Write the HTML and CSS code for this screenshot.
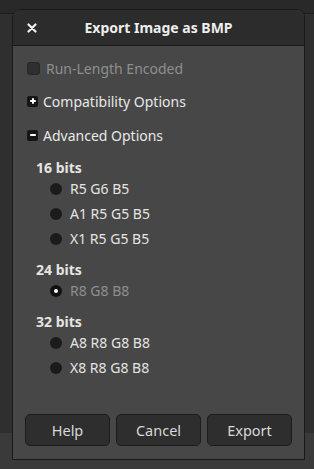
FILE: index.html
```html
<!DOCTYPE html>
<html lang="en">
<head>
<meta charset="utf-8">
<title>Export Image as BMP</title>
<link rel="stylesheet" href="styles.css">
</head>
<body>
<div class="dialog">
  <div class="header">
    <div class="close">
      <svg width="10" height="10" viewBox="0 0 10 10"><path d="M1.5 1.5 L8.5 8.5 M8.5 1.5 L1.5 8.5" stroke="#f0f0f0" stroke-width="2.2" stroke-linecap="round" fill="none"/></svg>
    </div>
    <div class="title">Export Image as BMP</div>
    <div class="spacer"></div>
  </div>
  <div class="content">
    <div class="row check-row disabled">
      <span class="checkbox"></span>
      <span>Run-Length Encoded</span>
    </div>
    <div class="row expander first">
      <span class="exp-icon">
        <svg width="10" height="10" viewBox="0 0 10 10"><path d="M5 2.2 V7.8 M2.2 5 H7.8" stroke="#fff" stroke-width="2" fill="none"/></svg>
      </span>
      <span>Compatibility Options</span>
    </div>
    <div class="row expander">
      <span class="exp-icon">
        <svg width="10" height="10" viewBox="0 0 10 10"><path d="M2.2 5 H7.8" stroke="#fff" stroke-width="2" fill="none"/></svg>
      </span>
      <span>Advanced Options</span>
    </div>
    <div class="group g16">
      <div class="group-label">16 bits</div>
      <div class="radio-row"><span class="radio"></span><span>R5 G6 B5</span></div>
      <div class="radio-row"><span class="radio"></span><span>A1 R5 G5 B5</span></div>
      <div class="radio-row"><span class="radio"></span><span>X1 R5 G5 B5</span></div>
    </div>
    <div class="group">
      <div class="group-label">24 bits</div>
      <div class="radio-row disabled"><span class="radio checked"></span><span>R8 G8 B8</span></div>
    </div>
    <div class="group">
      <div class="group-label">32 bits</div>
      <div class="radio-row"><span class="radio"></span><span>A8 R8 G8 B8</span></div>
      <div class="radio-row"><span class="radio"></span><span>X8 R8 G8 B8</span></div>
    </div>
  </div>
  <div class="actions">
    <button class="btn">Help</button>
    <button class="btn">Cancel</button>
    <button class="btn">Export</button>
  </div>
</div>
</body>
</html>
```
FILE: styles.css
```css
* { box-sizing: border-box; }
html, body { margin: 0; padding: 0; }
body {
  width: 314px;
  height: 469px;
  overflow: hidden;
  font-family: "Noto Sans", "Open Sans", sans-serif;
  font-size: 14px;
  color: #e4e4e2;
  background: linear-gradient(to bottom, #292929 0 13px, #1c1c1c 13px 14px, #2f2f2f 14px 433px, #3a3a3a 433px);
  padding-top: 9px;
  padding-left: 12px;
}
.dialog {
  width: 293px;
  height: 451px;
  border: 1px solid #1a1a1a;
  border-radius: 8px 8px 0 0;
  background: #474747;
  display: flex;
  flex-direction: column;
  overflow: hidden;
}
.header {
  height: 36px;
  flex: none;
  background: #2c2c2c;
  border-bottom: 1px solid #1a1a1a;
  display: grid;
  grid-template-columns: 1fr auto 1fr;
  align-items: center;
}
.close {
  padding-left: 14px;
  display: flex;
  align-items: center;
  height: 100%;
}
.close svg { display: block; }
.title {
  font-weight: 700;
  font-size: 14px;
  color: #eeeeec;
}
.content {
  flex: 1;
  padding: 10px 0 0 14px;
  display: flex;
  flex-direction: column;
}
.row {
  height: 24px;
  display: flex;
  align-items: center;
}
.disabled { color: #8d8f8f; }
.checkbox {
  width: 13px;
  height: 13px;
  border-radius: 3px;
  background: #2f2f2f;
  border: 1px solid #262626;
  margin-right: 6px;
}
.expander { margin-top: 9px; color: #e8e8e6; }
.expander + .expander { margin-top: 10px; }
.exp-icon {
  width: 11px;
  height: 11px;
  border-radius: 2px;
  background: #161616;
  display: flex;
  align-items: center;
  justify-content: center;
  margin-right: 5px;
}
.exp-icon svg { display: block; }
.group { margin-top: 11px; padding-left: 9px; }
.group.g16 { margin-top: 13px; }
.group-label {
  height: 16px;
  line-height: 16px;
  font-weight: 700;
  color: #e4e4e2;
}
.radio-row {
  height: 25px;
  display: flex;
  align-items: center;
  padding-left: 14px;
}
.radio {
  width: 12px;
  height: 12px;
  border-radius: 50%;
  background: #1b1b1b;
  margin-right: 8px;
  position: relative;
}
.radio.checked { background: #111; }
.radio.checked::after {
  content: "";
  position: absolute;
  left: 4px;
  top: 4px;
  width: 4px;
  height: 4px;
  border-radius: 50%;
  background: #fff;
}
.actions {
  flex: none;
  display: flex;
  gap: 6px;
  padding: 0 12px 13px 12px;
}
.btn {
  flex: 1;
  height: 32px;
  background: #2e2e2e;
  border: 1px solid #1c1c1c;
  border-radius: 5px;
  color: #d8d8d6;
  font-family: inherit;
  font-size: 14.5px;
  padding: 0;
}
```
